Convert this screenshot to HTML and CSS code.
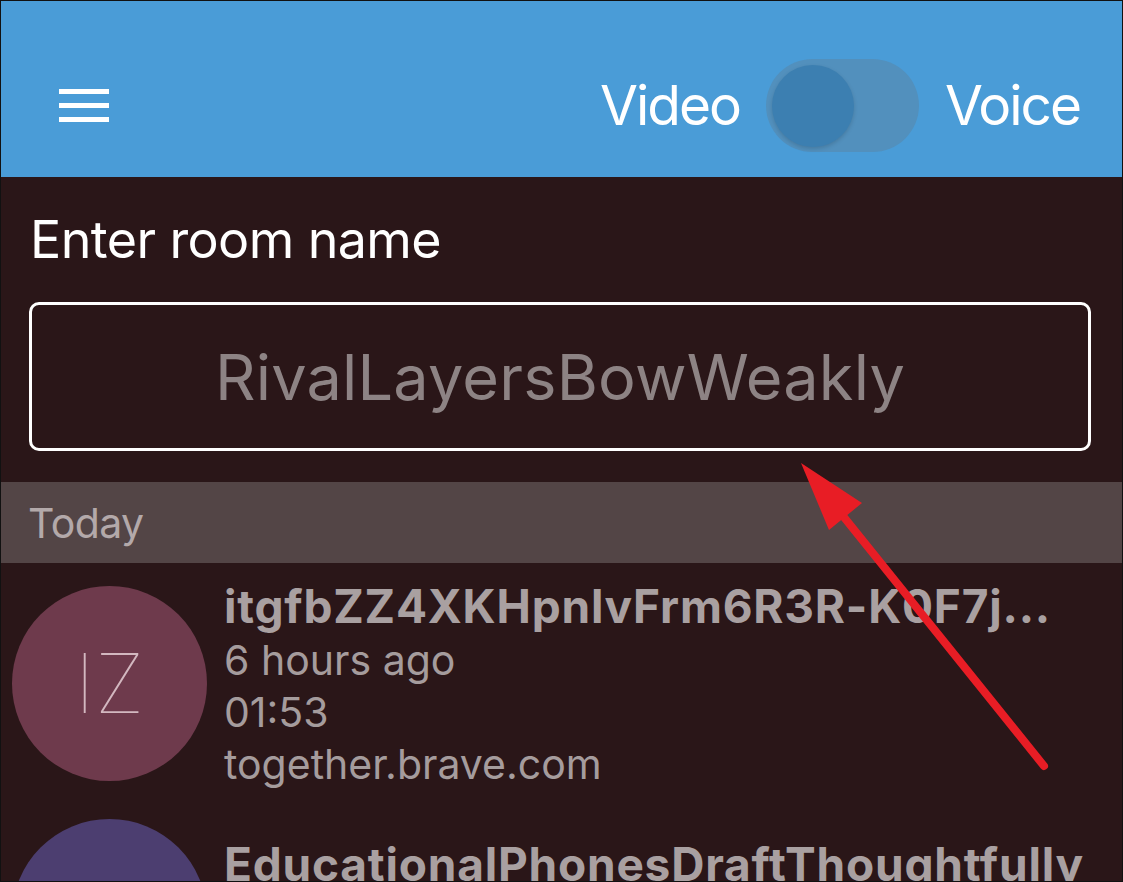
FILE: index.html
```html
<!DOCTYPE html>
<html lang="en">
<head>
    <meta charset="UTF-8">
    <meta name="viewport" content="width=device-width, initial-scale=1.0">
    <title>Brave Together</title>
    <link rel="stylesheet" href="styles.css">
</head>
<body>
    <div class="screen">
        <header class="topbar">
            <svg class="menu-icon" width="50" height="33" viewBox="0 0 50 33">
                <rect x="0" y="0" width="50" height="5" fill="#fff"/>
                <rect x="0" y="14" width="50" height="5" fill="#fff"/>
                <rect x="0" y="28" width="50" height="5" fill="#fff"/>
            </svg>
            <div class="mode">
                <span>Video</span>
                <div class="toggle"><div class="knob"></div></div>
                <span>Voice</span>
            </div>
        </header>

        <div class="room">
            <h1>Enter room name</h1>
            <div class="room-input">RivalLayersBowWeakly</div>
        </div>

        <div class="section">Today</div>

        <div class="call">
            <div class="avatar pink">IZ</div>
            <div class="info">
                <div class="title">itgfbZZ4XKHpnlvFrm6R3R-K0F7j...</div>
                <div>6 hours ago</div>
                <div>01:53</div>
                <div>together.brave.com</div>
            </div>
        </div>

        <div class="call second">
            <div class="avatar purple"></div>
            <div class="info">
                <div class="title">EducationalPhonesDraftThoughtfully</div>
            </div>
        </div>

        <!-- annotation arrow -->
        <svg class="arrow" width="1123" height="882" viewBox="0 0 1123 882">
            <line x1="1043" y1="765" x2="838" y2="510" stroke="#e81d25" stroke-width="8" stroke-linecap="round"/>
            <polygon points="800,462 861,502 828,529" fill="#e81d25"/>
        </svg>
    </div>
</body>
</html>
```

FILE: styles.css
```css
body {
    margin: 0;
    padding: 0;
    font-family: 'Inter', 'Roboto', sans-serif;
    background: #2a1618;
}
.screen {
    position: relative;
    width: 1123px;
    height: 882px;
    box-sizing: border-box;
    border: 1px solid #111;
    overflow: hidden;
    background: #2a1618;
}
.topbar {
    height: 176px;
    box-sizing: border-box;
    padding: 32px 42px 0 58px;
    background: #4a9cd7;
    display: flex;
    align-items: center;
    justify-content: space-between;
}
.menu-icon {
    display: block;
}
.mode {
    display: flex;
    align-items: center;
    gap: 26px;
    color: white;
    font-size: 55px;
    letter-spacing: -2px;
}
.toggle {
    width: 153px;
    height: 93px;
    flex-shrink: 0;
    border-radius: 47px;
    background: #5290bd;
    position: relative;
}
.knob {
    position: absolute;
    left: 6px;
    top: 6px;
    width: 82px;
    height: 82px;
    border-radius: 50%;
    background: #3c7fb1;
    box-shadow: 0 2px 4px rgba(0,0,0,0.15);
}
.room {
    padding: 33px 31px 0 28px;
}
h1 {
    margin: 0;
    font-size: 52px;
    font-weight: 400;
    line-height: 60px;
    letter-spacing: -0.6px;
    color: white;
    padding-left: 1px;
}
.room-input {
    margin-top: 32px;
    height: 149px;
    box-sizing: border-box;
    border: 3px solid white;
    border-radius: 10px;
    display: flex;
    align-items: center;
    justify-content: center;
    color: #8d8384;
    font-size: 63px;
    letter-spacing: 0.2px;
}
.section {
    margin-top: 31px;
    height: 81px;
    background: #534546;
    padding-left: 27px;
    display: flex;
    align-items: center;
    color: #b3a9aa;
    font-size: 41px;
    letter-spacing: -0.6px;
}
.call {
    display: flex;
    align-items: flex-start;
    gap: 17px;
    padding-left: 11px;
    margin-top: 16px;
}
.call .avatar {
    margin-top: 7px;
}
.call.second {
    margin-top: 22px;
}
.call.second .info {
    margin-top: 25px;
}
.avatar {
    width: 195px;
    height: 195px;
    border-radius: 50%;
    flex-shrink: 0;
    display: flex;
    align-items: center;
    justify-content: center;
    font-size: 82px;
    font-weight: 100;
    color: #d3b8c0;
}
.pink {
    background: #6e3a4c;
}
.purple {
    background: #4c3e70;
}
.info {
    color: #a59c9d;
    font-size: 41px;
    line-height: 52px;
}
.title {
    font-size: 46px;
    line-height: 55px;
    font-weight: 700;
    letter-spacing: 0.8px;
    color: #a9a0a1;
}
.arrow {
    position: absolute;
    left: 0;
    top: 0;
}
```
